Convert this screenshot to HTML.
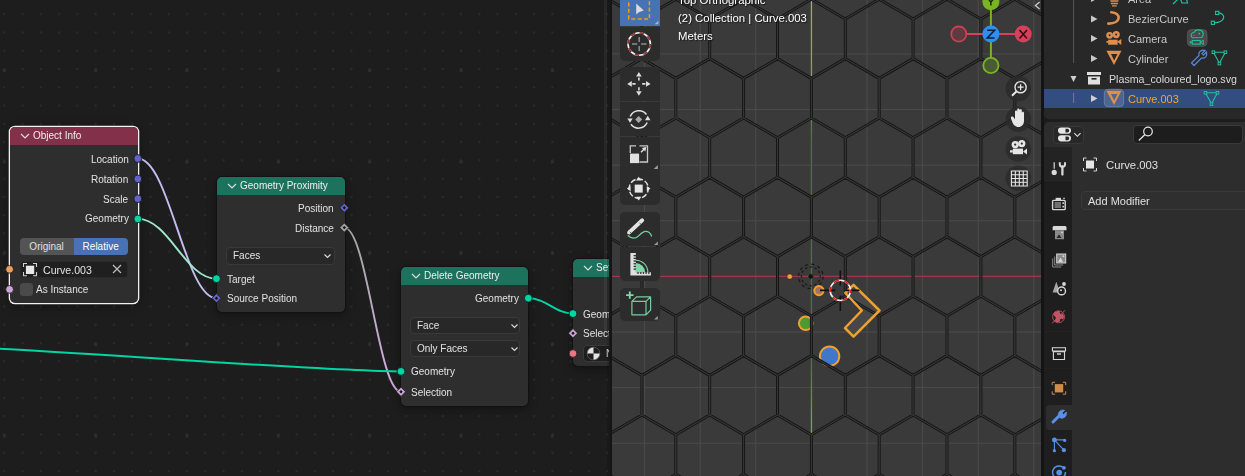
<!DOCTYPE html><html><head><meta charset="utf-8"><style>
*{margin:0;padding:0;box-sizing:border-box}
html,body{width:1245px;height:476px;overflow:hidden;background:#1d1d1d;font-family:"Liberation Sans", sans-serif;-webkit-font-smoothing:antialiased;}
.lbl,.vt,.ot,.hd,.dd{will-change:transform}
.abs{position:absolute}
.node{position:absolute;background:#2e2e2e;border-radius:5px;box-shadow:0 0 0 1px #121212,0 2px 8px 1px rgba(0,0,0,0.35);}
.node .hd{position:absolute;left:0;top:0;right:0;border-radius:5px 5px 0 0;color:#eeeeee;font-size:10px;line-height:18px;padding-left:23px;white-space:nowrap;}
.lbl{position:absolute;color:#e2e2e2;font-size:10px;line-height:14px;white-space:nowrap}
.dd{position:absolute;background:#282828;border:1px solid #3a3a3a;border-radius:4px;color:#e2e2e2;font-size:10px;line-height:15px;padding-left:6px;white-space:nowrap}
.vt{position:absolute;color:#ffffff;font-size:11.4px;white-space:nowrap;text-shadow:1px 1px 1px rgba(0,0,0,0.6)}
.ot{position:absolute;color:#d0d0d0;font-size:11px;white-space:nowrap;line-height:14px}
</style></head><body><div class="abs" style="left:0;top:0;width:609.2px;height:476px;overflow:hidden;background:#1d1d1d">
<svg class="abs" style="left:0;top:0" width="609.2" height="476">
<defs><pattern id="dots" x="3.3" y="13.2" width="18.27" height="18.27" patternUnits="userSpaceOnUse"><rect x="0" y="0" width="2" height="2" fill="#2b2b2b"/></pattern></defs>
<rect width="609.2" height="476" fill="url(#dots)"/>
<defs><pattern id="mdots" x="2.8" y="-22.3" width="91.35" height="91.35" patternUnits="userSpaceOnUse"><rect x="0" y="0" width="3" height="3" fill="#2e2e2e"/></pattern></defs>
<rect width="609.2" height="476" fill="url(#mdots)"/>
<defs><linearGradient id="g1" x1="0" y1="0" x2="0" y2="1"><stop offset="0.15" stop-color="#a8a8a8"/><stop offset="0.85" stop-color="#cfa9dc"/></linearGradient></defs>
<path d="M137.8,158.5 C169.24,158.5 184.96,298.2 216.4,298.2" stroke="#c4bdf0" stroke-width="1.9" fill="none"/>
<path d="M137.8,218.9 C169.24,218.9 184.96,278.7 216.4,278.7" stroke="#9de8cc" stroke-width="1.9" fill="none"/>
<path d="M344.3,227.6 C366.98,227.6 378.32,391.8 401,391.8" stroke="url(#g1)" stroke-width="1.9" fill="none"/>
<path d="M528.3,298.2 C546.18,298.2 555.12,313.6 573,313.6" stroke="#00d6a3" stroke-width="2" fill="none"/>
<path d="M-5,348.5 C150,357 330,371.4 401,371.4" stroke="#00d6a3" stroke-width="2" fill="none"/>
</svg>
<div class="node" style="left:9.8px;top:127px;width:128px;height:175.8px;box-shadow:0 0 0 1.3px #f2f2f2,0 2px 8px 1px rgba(0,0,0,0.35);"><div class="hd" style="height:18px;background:#83314a;line-height:18px"><svg class="abs" style="left:10px;top:6.0px" width="10" height="6"><path d="M1,1 L5,5 L9,1" stroke="#dcdcdc" stroke-width="1.2" fill="none"/></svg>Object Info</div>
</div>
<div class="lbl" style="right:480.70000000000005px;top:152.6px;text-align:right">Location</div>
<div class="lbl" style="right:480.70000000000005px;top:172.8px;text-align:right">Rotation</div>
<div class="lbl" style="right:480.70000000000005px;top:192.5px;text-align:right">Scale</div>
<div class="lbl" style="right:480.70000000000005px;top:212.3px;text-align:right">Geometry</div>
<div class="abs" style="left:19.6px;top:238px;width:54px;height:17px;background:#545454;border-radius:4px 0 0 4px;color:#e0e0e0;font-size:10px;line-height:17px;text-align:center">Original</div>
<div class="abs" style="left:73.6px;top:238px;width:54.2px;height:17px;background:#4772b3;border-radius:0 4px 4px 0;color:#ffffff;font-size:10px;line-height:17px;text-align:center">Relative</div>
<div class="abs" style="left:19.6px;top:260.5px;width:108.2px;height:17.6px;background:#1f1f1f;border:1px solid #2a2a2a;border-radius:4px;"></div>
<svg class="abs" style="left:22px;top:262px" width="17" height="16"><path d="M1.5,5 V1.5 H5 M11,1.5 H14.5 V5 M14.5,10 V13.8 H11 M5,13.8 H1.5 V10" stroke="#d0d0d0" stroke-width="1.1" fill="none"/><rect x="3.9" y="3.7" width="8.3" height="8.3" fill="#e8e8e8"/></svg>
<div class="lbl" style="left:42.5px;top:262.6px;font-size:10.6px">Curve.003</div>
<svg class="abs" style="left:112px;top:264px" width="10" height="10"><path d="M1,1 L9,9 M9,1 L1,9" stroke="#bdbdbd" stroke-width="1.2"/></svg>
<div class="abs" style="left:19.6px;top:282.7px;width:13.4px;height:13.4px;background:#4a4a4a;border-radius:3px"></div>
<div class="lbl" style="left:36px;top:283.29999999999995px">As Instance</div>
<div class="node" style="left:216.5px;top:176.5px;width:128px;height:135px;"><div class="hd" style="height:18px;background:#1d725e;line-height:18px"><svg class="abs" style="left:10px;top:6.0px" width="10" height="6"><path d="M1,1 L5,5 L9,1" stroke="#dcdcdc" stroke-width="1.2" fill="none"/></svg>Geometry Proximity</div>
</div>
<div class="lbl" style="right:275.20000000000005px;top:201.70000000000002px;text-align:right">Position</div>
<div class="lbl" style="right:275.20000000000005px;top:221.5px;text-align:right">Distance</div>
<div class="dd" style="left:226px;top:247px;width:109px;height:17.5px">Faces</div>
<svg class="abs" style="left:323px;top:253px" width="9" height="6"><path d="M1.5,1.5 L4.5,4.5 L7.5,1.5" stroke="#dcdcdc" stroke-width="1.1" fill="none"/></svg>
<div class="lbl" style="left:227px;top:272.59999999999997px">Target</div>
<div class="lbl" style="left:227px;top:292.09999999999997px">Source Position</div>
<div class="node" style="left:401px;top:267px;width:127.3px;height:138.5px;"><div class="hd" style="height:18px;background:#1d725e;line-height:18px"><svg class="abs" style="left:10px;top:6.0px" width="10" height="6"><path d="M1,1 L5,5 L9,1" stroke="#dcdcdc" stroke-width="1.2" fill="none"/></svg>Delete Geometry</div>
</div>
<div class="lbl" style="right:90.20000000000005px;top:292.09999999999997px;text-align:right">Geometry</div>
<div class="dd" style="left:409.8px;top:317.3px;width:109.5px;height:17px;line-height:15.5px">Face</div>
<svg class="abs" style="left:509.5px;top:323.3px" width="9" height="6"><path d="M1.5,1.5 L4.5,4.5 L7.5,1.5" stroke="#dcdcdc" stroke-width="1.1" fill="none"/></svg>
<div class="dd" style="left:409.8px;top:340.3px;width:109.5px;height:17px;line-height:15.5px">Only Faces</div>
<svg class="abs" style="left:509.5px;top:346.3px" width="9" height="6"><path d="M1.5,1.5 L4.5,4.5 L7.5,1.5" stroke="#dcdcdc" stroke-width="1.1" fill="none"/></svg>
<div class="lbl" style="left:411px;top:365.29999999999995px">Geometry</div>
<div class="lbl" style="left:411px;top:385.7px">Selection</div>
<div class="node" style="left:573px;top:259px;width:140px;height:107px;"><div class="hd" style="height:18px;background:#1d725e;line-height:18px"><svg class="abs" style="left:10px;top:6.0px" width="10" height="6"><path d="M1,1 L5,5 L9,1" stroke="#dcdcdc" stroke-width="1.2" fill="none"/></svg>Set Material</div>
</div>
<div class="lbl" style="left:583px;top:307.5px">Geometry</div>
<div class="lbl" style="left:583px;top:327.09999999999997px">Selection</div>
<div class="dd" style="left:582.6px;top:344.9px;width:60px;height:17px;background:#1e1e1e;border-color:#3a3a3a"></div>
<svg class="abs" style="left:585.5px;top:345.9px" width="15" height="15"><circle cx="7.5" cy="7.5" r="6.3" fill="#e4e4e4" stroke="#777" stroke-width="0.6"/><path d="M7.5,1.2 A6.3,6.3 0 0 1 13.8,7.5 H7.5Z M7.5,7.5 H1.2 A6.3,6.3 0 0 0 7.5,13.8Z" fill="#1e1e1e"/></svg>
<div class="lbl" style="left:606px;top:347px">N</div>
<svg class="abs" style="left:0;top:0" width="609.2" height="476"><circle cx="137.8" cy="158.5" r="3.9" fill="#6363c7" stroke="#141414" stroke-width="0.8"/><circle cx="137.8" cy="178.9" r="3.9" fill="#6363c7" stroke="#141414" stroke-width="0.8"/><circle cx="137.8" cy="198.7" r="3.9" fill="#6363c7" stroke="#141414" stroke-width="0.8"/><circle cx="137.8" cy="218.9" r="3.9" fill="#00d6a3" stroke="#141414" stroke-width="0.8"/><circle cx="9.6" cy="269.3" r="3.9" fill="#ed9e5c" stroke="#141414" stroke-width="0.8"/><circle cx="9.6" cy="289.4" r="3.9" fill="#cca6d6" stroke="#141414" stroke-width="0.8"/><polygon points="344.3,203.20000000000002 348.90000000000003,207.8 344.3,212.4 339.7,207.8" fill="#6363c7" stroke="#141414" stroke-width="0.7"/><polygon points="344.3,206.10000000000002 346.0,207.8 344.3,209.5 342.6,207.8" fill="#161616"/><polygon points="344.3,223.0 348.90000000000003,227.6 344.3,232.2 339.7,227.6" fill="#a1a1a1" stroke="#141414" stroke-width="0.7"/><polygon points="344.3,225.9 346.0,227.6 344.3,229.29999999999998 342.6,227.6" fill="#161616"/><circle cx="216.5" cy="278.7" r="3.9" fill="#00d6a3" stroke="#141414" stroke-width="0.8"/><polygon points="216.5,293.59999999999997 221.1,298.2 216.5,302.8 211.9,298.2" fill="#6363c7" stroke="#141414" stroke-width="0.7"/><polygon points="216.5,296.5 218.2,298.2 216.5,299.9 214.8,298.2" fill="#161616"/><circle cx="528.3" cy="298.2" r="3.9" fill="#00d6a3" stroke="#141414" stroke-width="0.8"/><circle cx="401" cy="371.4" r="3.9" fill="#00d6a3" stroke="#141414" stroke-width="0.8"/><polygon points="401,387.2 405.6,391.8 401,396.40000000000003 396.4,391.8" fill="#cca6d6" stroke="#141414" stroke-width="0.7"/><polygon points="401,390.1 402.7,391.8 401,393.5 399.3,391.8" fill="#161616"/><circle cx="573" cy="313.6" r="3.9" fill="#00d6a3" stroke="#141414" stroke-width="0.8"/><polygon points="573,328.59999999999997 577.6,333.2 573,337.8 568.4,333.2" fill="#cca6d6" stroke="#141414" stroke-width="0.7"/><polygon points="573,331.5 574.7,333.2 573,334.9 571.3,333.2" fill="#161616"/><circle cx="573" cy="353.5" r="3.9" fill="#eb7582" stroke="#141414" stroke-width="0.8"/></svg>
<div class="abs" style="left:603.7px;top:-5px;width:3.6px;height:336px;border-radius:2px;background:rgba(255,255,255,0.05)"></div>
</div>
<div class="abs" style="left:607.1px;top:0;width:2.5px;height:476px;background:rgba(0,0,0,0.12)"></div><div class="abs" style="left:609.6px;top:0;width:2.2px;height:476px;background:#151515"></div>
<div class="abs" style="left:611.8px;top:0;width:429.4000000000001px;height:476px;overflow:hidden;background:#3a3a3a">
<svg class="abs" style="left:-611.8px;top:0" width="1245" height="476"><line x1="477.74" y1="0" x2="477.74" y2="476" stroke="#4c4c4c" stroke-width="1"/><line x1="533.35" y1="0" x2="533.35" y2="476" stroke="#4c4c4c" stroke-width="1"/><line x1="588.96" y1="0" x2="588.96" y2="476" stroke="#4c4c4c" stroke-width="1"/><line x1="644.57" y1="0" x2="644.57" y2="476" stroke="#4c4c4c" stroke-width="1"/><line x1="700.18" y1="0" x2="700.18" y2="476" stroke="#4c4c4c" stroke-width="1"/><line x1="755.79" y1="0" x2="755.79" y2="476" stroke="#4c4c4c" stroke-width="1"/><line x1="867.01" y1="0" x2="867.01" y2="476" stroke="#4c4c4c" stroke-width="1"/><line x1="922.62" y1="0" x2="922.62" y2="476" stroke="#4c4c4c" stroke-width="1"/><line x1="978.23" y1="0" x2="978.23" y2="476" stroke="#4c4c4c" stroke-width="1"/><line x1="1033.84" y1="0" x2="1033.84" y2="476" stroke="#4c4c4c" stroke-width="1"/><line x1="1089.45" y1="0" x2="1089.45" y2="476" stroke="#4c4c4c" stroke-width="1"/><line x1="0" y1="-57.26" x2="1245" y2="-57.26" stroke="#4c4c4c" stroke-width="1"/><line x1="0" y1="-1.65" x2="1245" y2="-1.65" stroke="#4c4c4c" stroke-width="1"/><line x1="0" y1="53.96" x2="1245" y2="53.96" stroke="#4c4c4c" stroke-width="1"/><line x1="0" y1="109.57" x2="1245" y2="109.57" stroke="#4c4c4c" stroke-width="1"/><line x1="0" y1="165.18" x2="1245" y2="165.18" stroke="#4c4c4c" stroke-width="1"/><line x1="0" y1="220.79" x2="1245" y2="220.79" stroke="#4c4c4c" stroke-width="1"/><line x1="0" y1="332.01" x2="1245" y2="332.01" stroke="#4c4c4c" stroke-width="1"/><line x1="0" y1="387.62" x2="1245" y2="387.62" stroke="#4c4c4c" stroke-width="1"/><line x1="0" y1="443.23" x2="1245" y2="443.23" stroke="#4c4c4c" stroke-width="1"/><line x1="0" y1="498.84" x2="1245" y2="498.84" stroke="#4c4c4c" stroke-width="1"/><line x1="0" y1="554.45" x2="1245" y2="554.45" stroke="#4c4c4c" stroke-width="1"/><line x1="0" y1="276.4" x2="1245" y2="276.4" stroke="#9c3a4c" stroke-width="1.2"/><defs><linearGradient id="ya" x1="0" y1="0" x2="0" y2="1"><stop offset="0" stop-color="#86c42c"/><stop offset="0.16" stop-color="#78b028"/><stop offset="0.3" stop-color="#52702e"/><stop offset="0.75" stop-color="#52702e"/><stop offset="0.9" stop-color="#7aac2a"/><stop offset="1" stop-color="#6a9a2a"/></linearGradient></defs><rect x="810.8" y="0" width="1.3" height="476" fill="url(#ya)"/><path d="M853.5,284.8 L879.5,310.5 L853.5,336.6 L845,328 L861.8,310.5 L845.3,293Z" fill="#474747"/><circle cx="805.7" cy="323.3" r="6.8" fill="#4e9a30" stroke="#f0a030" stroke-width="2"/><circle cx="829.6" cy="356.2" r="9.7" fill="#3f78c8" stroke="#f0a030" stroke-width="2"/><path d="M574.10,-60.20 L608.00,-40.40 L608.00,-0.80 L574.10,19.00 L540.20,-0.80 L540.20,-40.40Z M641.90,-60.20 L675.80,-40.40 L675.80,-0.80 L641.90,19.00 L608.00,-0.80 L608.00,-40.40Z M709.70,-60.20 L743.60,-40.40 L743.60,-0.80 L709.70,19.00 L675.80,-0.80 L675.80,-40.40Z M777.50,-60.20 L811.40,-40.40 L811.40,-0.80 L777.50,19.00 L743.60,-0.80 L743.60,-40.40Z M845.30,-60.20 L879.20,-40.40 L879.20,-0.80 L845.30,19.00 L811.40,-0.80 L811.40,-40.40Z M913.10,-60.20 L947.00,-40.40 L947.00,-0.80 L913.10,19.00 L879.20,-0.80 L879.20,-40.40Z M980.90,-60.20 L1014.80,-40.40 L1014.80,-0.80 L980.90,19.00 L947.00,-0.80 L947.00,-40.40Z M1048.70,-60.20 L1082.60,-40.40 L1082.60,-0.80 L1048.70,19.00 L1014.80,-0.80 L1014.80,-40.40Z M608.00,-0.80 L641.90,19.00 L641.90,58.60 L608.00,78.40 L574.10,58.60 L574.10,19.00Z M675.80,-0.80 L709.70,19.00 L709.70,58.60 L675.80,78.40 L641.90,58.60 L641.90,19.00Z M743.60,-0.80 L777.50,19.00 L777.50,58.60 L743.60,78.40 L709.70,58.60 L709.70,19.00Z M811.40,-0.80 L845.30,19.00 L845.30,58.60 L811.40,78.40 L777.50,58.60 L777.50,19.00Z M879.20,-0.80 L913.10,19.00 L913.10,58.60 L879.20,78.40 L845.30,58.60 L845.30,19.00Z M947.00,-0.80 L980.90,19.00 L980.90,58.60 L947.00,78.40 L913.10,58.60 L913.10,19.00Z M1014.80,-0.80 L1048.70,19.00 L1048.70,58.60 L1014.80,78.40 L980.90,58.60 L980.90,19.00Z M574.10,58.60 L608.00,78.40 L608.00,118.00 L574.10,137.80 L540.20,118.00 L540.20,78.40Z M641.90,58.60 L675.80,78.40 L675.80,118.00 L641.90,137.80 L608.00,118.00 L608.00,78.40Z M709.70,58.60 L743.60,78.40 L743.60,118.00 L709.70,137.80 L675.80,118.00 L675.80,78.40Z M777.50,58.60 L811.40,78.40 L811.40,118.00 L777.50,137.80 L743.60,118.00 L743.60,78.40Z M845.30,58.60 L879.20,78.40 L879.20,118.00 L845.30,137.80 L811.40,118.00 L811.40,78.40Z M913.10,58.60 L947.00,78.40 L947.00,118.00 L913.10,137.80 L879.20,118.00 L879.20,78.40Z M980.90,58.60 L1014.80,78.40 L1014.80,118.00 L980.90,137.80 L947.00,118.00 L947.00,78.40Z M1048.70,58.60 L1082.60,78.40 L1082.60,118.00 L1048.70,137.80 L1014.80,118.00 L1014.80,78.40Z M608.00,118.00 L641.90,137.80 L641.90,177.40 L608.00,197.20 L574.10,177.40 L574.10,137.80Z M675.80,118.00 L709.70,137.80 L709.70,177.40 L675.80,197.20 L641.90,177.40 L641.90,137.80Z M743.60,118.00 L777.50,137.80 L777.50,177.40 L743.60,197.20 L709.70,177.40 L709.70,137.80Z M811.40,118.00 L845.30,137.80 L845.30,177.40 L811.40,197.20 L777.50,177.40 L777.50,137.80Z M879.20,118.00 L913.10,137.80 L913.10,177.40 L879.20,197.20 L845.30,177.40 L845.30,137.80Z M947.00,118.00 L980.90,137.80 L980.90,177.40 L947.00,197.20 L913.10,177.40 L913.10,137.80Z M1014.80,118.00 L1048.70,137.80 L1048.70,177.40 L1014.80,197.20 L980.90,177.40 L980.90,137.80Z M574.10,177.40 L608.00,197.20 L608.00,236.80 L574.10,256.60 L540.20,236.80 L540.20,197.20Z M641.90,177.40 L675.80,197.20 L675.80,236.80 L641.90,256.60 L608.00,236.80 L608.00,197.20Z M709.70,177.40 L743.60,197.20 L743.60,236.80 L709.70,256.60 L675.80,236.80 L675.80,197.20Z M777.50,177.40 L811.40,197.20 L811.40,236.80 L777.50,256.60 L743.60,236.80 L743.60,197.20Z M845.30,177.40 L879.20,197.20 L879.20,236.80 L845.30,256.60 L811.40,236.80 L811.40,197.20Z M913.10,177.40 L947.00,197.20 L947.00,236.80 L913.10,256.60 L879.20,236.80 L879.20,197.20Z M980.90,177.40 L1014.80,197.20 L1014.80,236.80 L980.90,256.60 L947.00,236.80 L947.00,197.20Z M1048.70,177.40 L1082.60,197.20 L1082.60,236.80 L1048.70,256.60 L1014.80,236.80 L1014.80,197.20Z M608.00,236.80 L641.90,256.60 L641.90,296.20 L608.00,316.00 L574.10,296.20 L574.10,256.60Z M675.80,236.80 L709.70,256.60 L709.70,296.20 L675.80,316.00 L641.90,296.20 L641.90,256.60Z M743.60,236.80 L777.50,256.60 L777.50,296.20 L743.60,316.00 L709.70,296.20 L709.70,256.60Z M811.40,236.80 L845.30,256.60 L845.30,296.20 L811.40,316.00 L777.50,296.20 L777.50,256.60Z M879.20,236.80 L913.10,256.60 L913.10,296.20 L879.20,316.00 L845.30,296.20 L845.30,256.60Z M947.00,236.80 L980.90,256.60 L980.90,296.20 L947.00,316.00 L913.10,296.20 L913.10,256.60Z M1014.80,236.80 L1048.70,256.60 L1048.70,296.20 L1014.80,316.00 L980.90,296.20 L980.90,256.60Z M574.10,296.20 L608.00,316.00 L608.00,355.60 L574.10,375.40 L540.20,355.60 L540.20,316.00Z M641.90,296.20 L675.80,316.00 L675.80,355.60 L641.90,375.40 L608.00,355.60 L608.00,316.00Z M709.70,296.20 L743.60,316.00 L743.60,355.60 L709.70,375.40 L675.80,355.60 L675.80,316.00Z M777.50,296.20 L811.40,316.00 L811.40,355.60 L777.50,375.40 L743.60,355.60 L743.60,316.00Z M845.30,296.20 L879.20,316.00 L879.20,355.60 L845.30,375.40 L811.40,355.60 L811.40,316.00Z M913.10,296.20 L947.00,316.00 L947.00,355.60 L913.10,375.40 L879.20,355.60 L879.20,316.00Z M980.90,296.20 L1014.80,316.00 L1014.80,355.60 L980.90,375.40 L947.00,355.60 L947.00,316.00Z M1048.70,296.20 L1082.60,316.00 L1082.60,355.60 L1048.70,375.40 L1014.80,355.60 L1014.80,316.00Z M608.00,355.60 L641.90,375.40 L641.90,415.00 L608.00,434.80 L574.10,415.00 L574.10,375.40Z M675.80,355.60 L709.70,375.40 L709.70,415.00 L675.80,434.80 L641.90,415.00 L641.90,375.40Z M743.60,355.60 L777.50,375.40 L777.50,415.00 L743.60,434.80 L709.70,415.00 L709.70,375.40Z M811.40,355.60 L845.30,375.40 L845.30,415.00 L811.40,434.80 L777.50,415.00 L777.50,375.40Z M879.20,355.60 L913.10,375.40 L913.10,415.00 L879.20,434.80 L845.30,415.00 L845.30,375.40Z M947.00,355.60 L980.90,375.40 L980.90,415.00 L947.00,434.80 L913.10,415.00 L913.10,375.40Z M1014.80,355.60 L1048.70,375.40 L1048.70,415.00 L1014.80,434.80 L980.90,415.00 L980.90,375.40Z M574.10,415.00 L608.00,434.80 L608.00,474.40 L574.10,494.20 L540.20,474.40 L540.20,434.80Z M641.90,415.00 L675.80,434.80 L675.80,474.40 L641.90,494.20 L608.00,474.40 L608.00,434.80Z M709.70,415.00 L743.60,434.80 L743.60,474.40 L709.70,494.20 L675.80,474.40 L675.80,434.80Z M777.50,415.00 L811.40,434.80 L811.40,474.40 L777.50,494.20 L743.60,474.40 L743.60,434.80Z M845.30,415.00 L879.20,434.80 L879.20,474.40 L845.30,494.20 L811.40,474.40 L811.40,434.80Z M913.10,415.00 L947.00,434.80 L947.00,474.40 L913.10,494.20 L879.20,474.40 L879.20,434.80Z M980.90,415.00 L1014.80,434.80 L1014.80,474.40 L980.90,494.20 L947.00,474.40 L947.00,434.80Z M1048.70,415.00 L1082.60,434.80 L1082.60,474.40 L1048.70,494.20 L1014.80,474.40 L1014.80,434.80Z M608.00,474.40 L641.90,494.20 L641.90,533.80 L608.00,553.60 L574.10,533.80 L574.10,494.20Z M675.80,474.40 L709.70,494.20 L709.70,533.80 L675.80,553.60 L641.90,533.80 L641.90,494.20Z M743.60,474.40 L777.50,494.20 L777.50,533.80 L743.60,553.60 L709.70,533.80 L709.70,494.20Z M811.40,474.40 L845.30,494.20 L845.30,533.80 L811.40,553.60 L777.50,533.80 L777.50,494.20Z M879.20,474.40 L913.10,494.20 L913.10,533.80 L879.20,553.60 L845.30,533.80 L845.30,494.20Z M947.00,474.40 L980.90,494.20 L980.90,533.80 L947.00,553.60 L913.10,533.80 L913.10,494.20Z M1014.80,474.40 L1048.70,494.20 L1048.70,533.80 L1014.80,553.60 L980.90,533.80 L980.90,494.20Z" stroke="#161616" stroke-width="3" fill="none" stroke-linejoin="miter"/><path d="M574.10,-60.20 L608.00,-40.40 L608.00,-0.80 L574.10,19.00 L540.20,-0.80 L540.20,-40.40Z M641.90,-60.20 L675.80,-40.40 L675.80,-0.80 L641.90,19.00 L608.00,-0.80 L608.00,-40.40Z M709.70,-60.20 L743.60,-40.40 L743.60,-0.80 L709.70,19.00 L675.80,-0.80 L675.80,-40.40Z M777.50,-60.20 L811.40,-40.40 L811.40,-0.80 L777.50,19.00 L743.60,-0.80 L743.60,-40.40Z M845.30,-60.20 L879.20,-40.40 L879.20,-0.80 L845.30,19.00 L811.40,-0.80 L811.40,-40.40Z M913.10,-60.20 L947.00,-40.40 L947.00,-0.80 L913.10,19.00 L879.20,-0.80 L879.20,-40.40Z M980.90,-60.20 L1014.80,-40.40 L1014.80,-0.80 L980.90,19.00 L947.00,-0.80 L947.00,-40.40Z M1048.70,-60.20 L1082.60,-40.40 L1082.60,-0.80 L1048.70,19.00 L1014.80,-0.80 L1014.80,-40.40Z M608.00,-0.80 L641.90,19.00 L641.90,58.60 L608.00,78.40 L574.10,58.60 L574.10,19.00Z M675.80,-0.80 L709.70,19.00 L709.70,58.60 L675.80,78.40 L641.90,58.60 L641.90,19.00Z M743.60,-0.80 L777.50,19.00 L777.50,58.60 L743.60,78.40 L709.70,58.60 L709.70,19.00Z M811.40,-0.80 L845.30,19.00 L845.30,58.60 L811.40,78.40 L777.50,58.60 L777.50,19.00Z M879.20,-0.80 L913.10,19.00 L913.10,58.60 L879.20,78.40 L845.30,58.60 L845.30,19.00Z M947.00,-0.80 L980.90,19.00 L980.90,58.60 L947.00,78.40 L913.10,58.60 L913.10,19.00Z M1014.80,-0.80 L1048.70,19.00 L1048.70,58.60 L1014.80,78.40 L980.90,58.60 L980.90,19.00Z M574.10,58.60 L608.00,78.40 L608.00,118.00 L574.10,137.80 L540.20,118.00 L540.20,78.40Z M641.90,58.60 L675.80,78.40 L675.80,118.00 L641.90,137.80 L608.00,118.00 L608.00,78.40Z M709.70,58.60 L743.60,78.40 L743.60,118.00 L709.70,137.80 L675.80,118.00 L675.80,78.40Z M777.50,58.60 L811.40,78.40 L811.40,118.00 L777.50,137.80 L743.60,118.00 L743.60,78.40Z M845.30,58.60 L879.20,78.40 L879.20,118.00 L845.30,137.80 L811.40,118.00 L811.40,78.40Z M913.10,58.60 L947.00,78.40 L947.00,118.00 L913.10,137.80 L879.20,118.00 L879.20,78.40Z M980.90,58.60 L1014.80,78.40 L1014.80,118.00 L980.90,137.80 L947.00,118.00 L947.00,78.40Z M1048.70,58.60 L1082.60,78.40 L1082.60,118.00 L1048.70,137.80 L1014.80,118.00 L1014.80,78.40Z M608.00,118.00 L641.90,137.80 L641.90,177.40 L608.00,197.20 L574.10,177.40 L574.10,137.80Z M675.80,118.00 L709.70,137.80 L709.70,177.40 L675.80,197.20 L641.90,177.40 L641.90,137.80Z M743.60,118.00 L777.50,137.80 L777.50,177.40 L743.60,197.20 L709.70,177.40 L709.70,137.80Z M811.40,118.00 L845.30,137.80 L845.30,177.40 L811.40,197.20 L777.50,177.40 L777.50,137.80Z M879.20,118.00 L913.10,137.80 L913.10,177.40 L879.20,197.20 L845.30,177.40 L845.30,137.80Z M947.00,118.00 L980.90,137.80 L980.90,177.40 L947.00,197.20 L913.10,177.40 L913.10,137.80Z M1014.80,118.00 L1048.70,137.80 L1048.70,177.40 L1014.80,197.20 L980.90,177.40 L980.90,137.80Z M574.10,177.40 L608.00,197.20 L608.00,236.80 L574.10,256.60 L540.20,236.80 L540.20,197.20Z M641.90,177.40 L675.80,197.20 L675.80,236.80 L641.90,256.60 L608.00,236.80 L608.00,197.20Z M709.70,177.40 L743.60,197.20 L743.60,236.80 L709.70,256.60 L675.80,236.80 L675.80,197.20Z M777.50,177.40 L811.40,197.20 L811.40,236.80 L777.50,256.60 L743.60,236.80 L743.60,197.20Z M845.30,177.40 L879.20,197.20 L879.20,236.80 L845.30,256.60 L811.40,236.80 L811.40,197.20Z M913.10,177.40 L947.00,197.20 L947.00,236.80 L913.10,256.60 L879.20,236.80 L879.20,197.20Z M980.90,177.40 L1014.80,197.20 L1014.80,236.80 L980.90,256.60 L947.00,236.80 L947.00,197.20Z M1048.70,177.40 L1082.60,197.20 L1082.60,236.80 L1048.70,256.60 L1014.80,236.80 L1014.80,197.20Z M608.00,236.80 L641.90,256.60 L641.90,296.20 L608.00,316.00 L574.10,296.20 L574.10,256.60Z M675.80,236.80 L709.70,256.60 L709.70,296.20 L675.80,316.00 L641.90,296.20 L641.90,256.60Z M743.60,236.80 L777.50,256.60 L777.50,296.20 L743.60,316.00 L709.70,296.20 L709.70,256.60Z M811.40,236.80 L845.30,256.60 L845.30,296.20 L811.40,316.00 L777.50,296.20 L777.50,256.60Z M879.20,236.80 L913.10,256.60 L913.10,296.20 L879.20,316.00 L845.30,296.20 L845.30,256.60Z M947.00,236.80 L980.90,256.60 L980.90,296.20 L947.00,316.00 L913.10,296.20 L913.10,256.60Z M1014.80,236.80 L1048.70,256.60 L1048.70,296.20 L1014.80,316.00 L980.90,296.20 L980.90,256.60Z M574.10,296.20 L608.00,316.00 L608.00,355.60 L574.10,375.40 L540.20,355.60 L540.20,316.00Z M641.90,296.20 L675.80,316.00 L675.80,355.60 L641.90,375.40 L608.00,355.60 L608.00,316.00Z M709.70,296.20 L743.60,316.00 L743.60,355.60 L709.70,375.40 L675.80,355.60 L675.80,316.00Z M777.50,296.20 L811.40,316.00 L811.40,355.60 L777.50,375.40 L743.60,355.60 L743.60,316.00Z M845.30,296.20 L879.20,316.00 L879.20,355.60 L845.30,375.40 L811.40,355.60 L811.40,316.00Z M913.10,296.20 L947.00,316.00 L947.00,355.60 L913.10,375.40 L879.20,355.60 L879.20,316.00Z M980.90,296.20 L1014.80,316.00 L1014.80,355.60 L980.90,375.40 L947.00,355.60 L947.00,316.00Z M1048.70,296.20 L1082.60,316.00 L1082.60,355.60 L1048.70,375.40 L1014.80,355.60 L1014.80,316.00Z M608.00,355.60 L641.90,375.40 L641.90,415.00 L608.00,434.80 L574.10,415.00 L574.10,375.40Z M675.80,355.60 L709.70,375.40 L709.70,415.00 L675.80,434.80 L641.90,415.00 L641.90,375.40Z M743.60,355.60 L777.50,375.40 L777.50,415.00 L743.60,434.80 L709.70,415.00 L709.70,375.40Z M811.40,355.60 L845.30,375.40 L845.30,415.00 L811.40,434.80 L777.50,415.00 L777.50,375.40Z M879.20,355.60 L913.10,375.40 L913.10,415.00 L879.20,434.80 L845.30,415.00 L845.30,375.40Z M947.00,355.60 L980.90,375.40 L980.90,415.00 L947.00,434.80 L913.10,415.00 L913.10,375.40Z M1014.80,355.60 L1048.70,375.40 L1048.70,415.00 L1014.80,434.80 L980.90,415.00 L980.90,375.40Z M574.10,415.00 L608.00,434.80 L608.00,474.40 L574.10,494.20 L540.20,474.40 L540.20,434.80Z M641.90,415.00 L675.80,434.80 L675.80,474.40 L641.90,494.20 L608.00,474.40 L608.00,434.80Z M709.70,415.00 L743.60,434.80 L743.60,474.40 L709.70,494.20 L675.80,474.40 L675.80,434.80Z M777.50,415.00 L811.40,434.80 L811.40,474.40 L777.50,494.20 L743.60,474.40 L743.60,434.80Z M845.30,415.00 L879.20,434.80 L879.20,474.40 L845.30,494.20 L811.40,474.40 L811.40,434.80Z M913.10,415.00 L947.00,434.80 L947.00,474.40 L913.10,494.20 L879.20,474.40 L879.20,434.80Z M980.90,415.00 L1014.80,434.80 L1014.80,474.40 L980.90,494.20 L947.00,474.40 L947.00,434.80Z M1048.70,415.00 L1082.60,434.80 L1082.60,474.40 L1048.70,494.20 L1014.80,474.40 L1014.80,434.80Z M608.00,474.40 L641.90,494.20 L641.90,533.80 L608.00,553.60 L574.10,533.80 L574.10,494.20Z M675.80,474.40 L709.70,494.20 L709.70,533.80 L675.80,553.60 L641.90,533.80 L641.90,494.20Z M743.60,474.40 L777.50,494.20 L777.50,533.80 L743.60,553.60 L709.70,533.80 L709.70,494.20Z M811.40,474.40 L845.30,494.20 L845.30,533.80 L811.40,553.60 L777.50,533.80 L777.50,494.20Z M879.20,474.40 L913.10,494.20 L913.10,533.80 L879.20,553.60 L845.30,533.80 L845.30,494.20Z M947.00,474.40 L980.90,494.20 L980.90,533.80 L947.00,553.60 L913.10,533.80 L913.10,494.20Z M1014.80,474.40 L1048.70,494.20 L1048.70,533.80 L1014.80,553.60 L980.90,533.80 L980.90,494.20Z" stroke="#353535" stroke-width="0.9" fill="none"/></svg>
</div>
<div class="abs" style="left:1041.2px;top:0;width:2.8px;height:476px;background:#141414"></div>
<div class="abs" style="left:1044px;top:0;width:201px;height:119px;background:#282828;border-radius:0 0 0 5px"></div>
<div class="abs" style="left:1044px;top:88.5px;width:201px;height:19.5px;background:#334d80"></div>
<div class="abs" style="left:1044px;top:122px;width:201px;height:354px;background:#2d2d2d;border-radius:5px 0 0 0"></div>
<div class="abs" style="left:1044px;top:147px;width:28px;height:329px;background:#1e1e1e"></div>
<div class="abs" style="left:1044px;top:147.3px;width:28px;height:36px;background:#232323;border-bottom:1px solid #1b1b1b"></div>
<svg class="abs" style="left:0;top:0" width="1245" height="476"><defs><clipPath id="vc"><rect x="611.8" y="0" width="429.4" height="476"/></clipPath></defs><g clip-path="url(#vc)"><circle cx="810.8" cy="276.4" r="12.2" fill="none" stroke="#181818" stroke-width="1.2" stroke-dasharray="3.2 3.2"/><circle cx="810.8" cy="276.4" r="9.4" fill="none" stroke="#181818" stroke-width="1.2" stroke-dasharray="2.5 2.4" stroke-dashoffset="1.2"/><path d="M810.8,273.6 L813.6,276.4 L810.8,279.2 L808,276.4Z" fill="#111"/><circle cx="789.7" cy="276.5" r="2.6" fill="#f5a030" stroke="#222" stroke-width="0.4"/><circle cx="818.9" cy="290.6" r="4.6" fill="#a87060" stroke="#f0a030" stroke-width="2"/><path d="M853.5,284.8 L879.5,310.5 L853.5,336.6 L845,328 L861.8,310.5 L845.3,293Z" fill="none" stroke="#f0a030" stroke-width="2.5" stroke-linejoin="round"/><path d="M820,290.4 H835.3 M845.3,290.4 H859.5 M840.3,270.5 V285.4 M840.3,295.4 V311" stroke="#111" stroke-width="1.6"/><circle cx="840.3" cy="290.4" r="10.1" fill="none" stroke="#f0f0f0" stroke-width="1.6"/><circle cx="840.3" cy="290.4" r="10.1" fill="none" stroke="#e02020" stroke-width="1.6" stroke-dasharray="5.4 5.4" stroke-dashoffset="2.7"/><line x1="958.8" y1="34.1" x2="1023.2" y2="34.1" stroke="#d9405a" stroke-width="2"/><line x1="990.9" y1="1.7" x2="990.9" y2="65.5" stroke="#79b523" stroke-width="2"/><circle cx="958.8" cy="34.1" r="7.6" fill="#5e3a42" stroke="#c8424f" stroke-width="1.8"/><circle cx="990.9" cy="65.5" r="7.6" fill="#4a5a32" stroke="#79b523" stroke-width="1.8"/><circle cx="1023.2" cy="34.1" r="8.5" fill="#d6405a"/><circle cx="990.9" cy="1.7" r="8.5" fill="#79b523"/><circle cx="990.9" cy="34.1" r="8.5" fill="#2e8ff0"/><path d="M1019.5,30 L1027,38.5 M1027,30 L1019.5,38.5" stroke="#3a0a14" stroke-width="1.6"/><path d="M987.2,30.2 H994.6 L987.2,38 H994.6" stroke="#0a2040" stroke-width="1.6" fill="none"/><path d="M987.5,-2 L990.9,2 L994.3,-2 M990.9,2 V5.5" stroke="#1a2a08" stroke-width="1.5" fill="none"/><circle cx="1018.3" cy="88.6" r="12.8" fill="#2a2a2a" fill-opacity="0.8"/><circle cx="1018.3" cy="119.2" r="12.8" fill="#2a2a2a" fill-opacity="0.8"/><circle cx="1018.3" cy="149" r="12.8" fill="#2a2a2a" fill-opacity="0.8"/><circle cx="1018.3" cy="178.2" r="12.8" fill="#2a2a2a" fill-opacity="0.8"/><circle cx="1020.6" cy="87.2" r="5.6" fill="none" stroke="#e6e6e6" stroke-width="1.4"/><path d="M1016.6,91.2 L1012,95.8" stroke="#e6e6e6" stroke-width="2"/><path d="M1020.6,84.2 V90.2 M1017.6,87.2 H1023.6" stroke="#e6e6e6" stroke-width="1.3"/><path d="M1011,118.5 C1010.5,116.5 1012.8,115.8 1013.8,117.5 L1015,119.5 V111.8 C1015,110 1017.2,110 1017.2,111.8 V117.5 V109.8 C1017.2,108 1019.5,108 1019.5,109.8 V117.5 V110.5 C1019.5,108.8 1021.8,108.8 1021.8,110.5 V117.8 V113 C1021.8,111.3 1024,111.3 1024,113 V121 C1024,124.5 1021.5,127 1018.5,127 C1015.5,127 1013.5,125 1012.5,122.5Z" fill="#e6e6e6"/><circle cx="1015.2" cy="144.6" r="3.6" fill="#e6e6e6"/><circle cx="1021.8" cy="143.6" r="3.6" fill="#e6e6e6"/><circle cx="1015.2" cy="144.6" r="1.1" fill="#2a2a2a"/><circle cx="1021.8" cy="143.6" r="1.1" fill="#2a2a2a"/><rect x="1012.8" y="148.6" width="10.2" height="5.6" fill="#e6e6e6"/><path d="M1023,151.4 L1027,148.4 V154.6 Z M1010,150.2 H1012.8 V152.4 H1010Z" fill="#e6e6e6"/><path d="M1011.4,171 H1027.2 V186 H1011.4Z M1011.4,174.75 H1027.2 M1011.4,178.5 H1027.2 M1011.4,182.25 H1027.2 M1015.35,171 V186 M1019.3,171 V186 M1023.25,171 V186" stroke="#e6e6e6" stroke-width="1.1" fill="none"/><path d="M1039.6,2 L1035.4,5.5 L1039.6,9" stroke="#cfcfcf" stroke-width="1.2" fill="none"/></g></svg>
<div class="abs" style="left:620px;top:-5px;width:40.3px;height:31px;background:#4772b3;border-radius:5px 5px 0px 0px"></div><div class="abs" style="left:620px;top:26.6px;width:40.3px;height:34.199999999999996px;background:#2c2c2c;border-radius:0px 0px 5px 5px"></div><div class="abs" style="left:620px;top:67.4px;width:40.3px;height:33.599999999999994px;background:#2c2c2c;border-radius:5px 5px 0px 0px"></div><div class="abs" style="left:620px;top:101.6px;width:40.3px;height:34.400000000000006px;background:#2c2c2c;border-radius:0px 0px 0px 0px"></div><div class="abs" style="left:620px;top:136.6px;width:40.3px;height:34.0px;background:#2c2c2c;border-radius:0px 0px 0px 0px"></div><div class="abs" style="left:620px;top:171.2px;width:40.3px;height:34.0px;background:#2c2c2c;border-radius:0px 0px 5px 5px"></div><div class="abs" style="left:620px;top:212.4px;width:40.3px;height:33.79999999999998px;background:#2c2c2c;border-radius:5px 5px 0px 0px"></div><div class="abs" style="left:620px;top:246.8px;width:40.3px;height:34.39999999999998px;background:#2c2c2c;border-radius:0px 0px 5px 5px"></div><div class="abs" style="left:620px;top:288px;width:40.3px;height:32.80000000000001px;background:#2c2c2c;border-radius:5px 5px 5px 5px"></div><div class="vt" style="left:678px;top:-6px">Top Orthographic</div><div class="vt" style="left:678px;top:12.4px">(2) Collection | Curve.003</div><div class="vt" style="left:678px;top:30.3px">Meters</div>
<svg class="abs" style="left:0;top:0" width="1245" height="476"><path d="M628.8,-4 V19.1 H649.4 V-4" fill="none" stroke="#f5a000" stroke-width="1.5" stroke-dasharray="4 2.4"/><path d="M636.2,3.6 V14.4 L638.8,12.2 L643.8,10.4 Z" fill="#dadada"/><path d="M654.6,24.3 L658.4,20.8 V24.3Z" fill="#a8b8d0"/><circle cx="639.2" cy="44" r="11.2" fill="none" stroke="#f0f0f0" stroke-width="1.6"/><circle cx="639.2" cy="44" r="11.2" fill="none" stroke="#913434" stroke-width="1.8" stroke-dasharray="4.4 4.4" stroke-dashoffset="0"/><path d="M639.2,37 V42 M639.2,46 V51 M632,44 H637.3 M641.1,44 H646.6" stroke="#8c8c8c" stroke-width="1.5"/><path d="M638.9,72 L636.1,76.6 H641.7Z M638.9,95.8 L636.1,91.2 H641.7Z M627.2,83.9 L631.8,81.1 V86.7Z M650.6,83.9 L646,81.1 V86.7Z" fill="#dcdcdc"/><path d="M638.9,77.4 V80.6 M638.9,87.2 V90.4 M632.4,83.9 H635.6 M642.2,83.9 H645.4" stroke="#dcdcdc" stroke-width="1.6"/><path d="M630.2,116.5 A9.5,9.5 0 0 1 646.5,114.5 M647.2,122.5 A9.5,9.5 0 0 1 630.9,124.3" stroke="#e0e0e0" stroke-width="1.5" fill="none"/><path d="M638.7,115.9 L642.2,119.4 L638.7,122.9 L635.2,119.4Z" fill="#a8a8a8"/><path d="M627.3,118.6 H632.7 L630,122.8Z M645,120.2 H650.5 L647.7,115.8Z" fill="#e0e0e0"/><path d="M639.5,145.8 H647.5 V162 H639.5" fill="none" stroke="#c8c8c8" stroke-width="1.3"/><path d="M630.3,153 V145.8 H636" fill="none" stroke="#c8c8c8" stroke-width="1.3"/><rect x="630" y="153.6" width="9.1" height="9.5" fill="#e0e0e0"/><path d="M641,152.3 L645.5,147.8" stroke="#e0e0e0" stroke-width="1.4"/><path d="M646.3,146.9 L641.8,147.9 L645.3,151.4Z" fill="#e0e0e0"/><path d="M653.6,168.9 L657.9,165 V168.9Z" fill="#9a9a9a"/><circle cx="638.7" cy="188.6" r="9.6" fill="none" stroke="#e0e0e0" stroke-width="1.4" stroke-dasharray="5.5 2.05" stroke-dashoffset="1.5"/><rect x="634.7" y="184.6" width="8" height="8" fill="#e6e6e6"/><path d="M638.7,176.8 L636,180.5 H641.4Z M638.7,200.4 L636,196.7 H641.4Z M626.9,188.6 L630.6,185.9 V191.3Z M650.5,188.6 L646.8,185.9 V191.3Z" fill="#e6e6e6"/><path d="M629.2,232.4 L642.2,220.3" stroke="#e2e2e2" stroke-width="3.9" stroke-linecap="round"/><path d="M627.3,234.3 L628.6,230.3 L631.2,232.9Z" fill="#e2e2e2"/><path d="M629.8,231.8 L632.2,234.2 M639.5,222.8 L641.9,225.2" stroke="#2c2c2c" stroke-width="0.7"/><path d="M628.2,235.8 C630.5,238 633,238.6 636,237.6 C639,236.5 641.5,231.6 645.5,231.4 C648.5,231.3 650.5,233.5 651.5,236" stroke="#6fcf9f" stroke-width="1.3" fill="none" stroke-linecap="round"/><path d="M654,245 L657.8,241.4 V245Z" fill="#9a9a9a"/><path d="M635.8,263 A9.3,9.3 0 0 1 645.1,272.2 H635.8Z" fill="#7fd6a8"/><path d="M635.8,260.2 A12,12 0 0 1 647.8,272.2" stroke="#7fd6a8" stroke-width="1.1" fill="none"/><path d="M630.4,253 H635.8 V272.2 H650.9 V275.5 H630.4Z" fill="#e0e0e0"/><rect x="633.6" y="255.0" width="2.3" height="1.3" fill="#2c2c2c"/><rect x="633.6" y="257.7" width="2.3" height="1.3" fill="#2c2c2c"/><rect x="633.6" y="260.4" width="2.3" height="1.3" fill="#2c2c2c"/><rect x="633.6" y="263.1" width="2.3" height="1.3" fill="#2c2c2c"/><rect x="633.6" y="265.8" width="2.3" height="1.3" fill="#2c2c2c"/><rect x="633.6" y="268.5" width="2.3" height="1.3" fill="#2c2c2c"/><rect x="637.4" y="272.1" width="1.3" height="1.8" fill="#2c2c2c"/><rect x="640.1" y="272.1" width="1.3" height="1.8" fill="#2c2c2c"/><rect x="642.8" y="272.1" width="1.3" height="1.8" fill="#2c2c2c"/><rect x="645.5" y="272.1" width="1.3" height="1.8" fill="#2c2c2c"/><rect x="648.2" y="272.1" width="1.3" height="1.8" fill="#2c2c2c"/><path d="M629.8,291.4 V298.8 M626.1,295.1 H633.5" stroke="#7fd6a8" stroke-width="1.9"/><path d="M631.9,301.4 H646 V314.8 H631.9Z M631.9,301.4 L636.5,296.8 H650.6 L646,301.4 M650.6,296.8 V310.2 L646,314.8" stroke="#76cc9e" stroke-width="1.2" fill="none" stroke-linejoin="round"/><path d="M654,319.5 L657.8,315.9 V319.5Z" fill="#9a9a9a"/></svg>
<svg class="abs" style="left:0;top:0" width="1245" height="476"><defs><clipPath id="oc"><rect x="1044" y="0" width="201" height="119"/></clipPath></defs><g clip-path="url(#oc)"><line x1="1073.6" y1="0" x2="1073.6" y2="63" stroke="#555" stroke-width="1"/><line x1="1073.6" y1="92.8" x2="1073.6" y2="103" stroke="#8a7a5a" stroke-width="1"/><path d="M1091,-5.0 L1097.5,-1.5 L1091,2.0Z" fill="#c8c8c8"/><path d="M1091,15.399999999999999 L1097.5,18.9 L1091,22.4Z" fill="#c8c8c8"/><path d="M1091,35.0 L1097.5,38.5 L1091,42.0Z" fill="#c8c8c8"/><path d="M1091,55.0 L1097.5,58.5 L1091,62.0Z" fill="#c8c8c8"/><path d="M1091,95 L1097.5,98.5 L1091,102Z" fill="#d0d0d0"/><path d="M1070.5,76 H1076.5 L1073.5,82Z" fill="#d0d0d0"/><path d="M1110.3,1 H1118.4 M1110.8,3.5 H1117.9 M1112,5.8 H1116.7" stroke="#e08f4a" stroke-width="1.3"/><path d="M1109,-6 H1120 V-1 H1109Z" fill="#e08f4a"/><path d="M1111.3,12.3 C1121.5,12.8 1121.5,23.8 1108.3,23.6" stroke="#e08f4a" stroke-width="2.6" fill="none" stroke-linecap="round"/><circle cx="1109.6" cy="35.3" r="3.4" fill="#e08f4a"/><circle cx="1116.2" cy="34.6" r="3.6" fill="#e08f4a"/><circle cx="1109.6" cy="35.3" r="1" fill="#282828"/><circle cx="1116.2" cy="34.6" r="1" fill="#282828"/><rect x="1108.1" y="39.7" width="9.5" height="5" fill="#e08f4a"/><path d="M1117.2,41.8 L1121.3,39 V44.9Z M1106.4,41 H1108.2 V42.8 H1106.4Z" fill="#e08f4a"/><path d="M1106.4,50.7 H1121.5 L1114,64.9Z M1111,54.1 H1117.4 L1114.2,60.4Z" fill="#e08f4a" fill-rule="evenodd"/><path d="M1087,72 H1101 V75 H1087Z M1088,76.5 H1100 V84.5 H1088Z" fill="#e0e0e0"/><rect x="1091.5" y="78" width="5" height="1.6" fill="#282828"/><rect x="1104.3" y="89.3" width="19.4" height="17.4" rx="4" fill="#5a7099" fill-opacity="0.7" stroke="#6f86ad" stroke-width="0.8"/><path d="M1106.4,90.7 H1121.5 L1114,104.9Z M1111,94.1 H1117.4 L1114.2,100.4Z" fill="#e08f4a" fill-rule="evenodd"/><path d="M1173,4 L1178,-1 M1180,-2 L1182,3 H1187.5 L1186,-3" stroke="#22c0a0" stroke-width="1.2" fill="none"/><path d="M1218.5,12.9 C1226,13.5 1226,22.5 1214.2,22.8" stroke="#22c0a0" stroke-width="1.2" fill="none"/><rect x="1215.6" y="11.3" width="3.2" height="3.2" fill="#282828" stroke="#22c0a0" stroke-width="1.1"/><rect x="1211.3" y="21.2" width="3.2" height="3.2" fill="#282828" stroke="#22c0a0" stroke-width="1.1"/><rect x="1187.4" y="29.6" width="19.6" height="16.7" rx="4" fill="#4a4a4a" stroke="#5a5a5a" stroke-width="0.8"/><path d="M1192.2,37.8 C1190.2,36 1191,32.5 1194.3,32.2 C1195.3,29.5 1199.5,29.2 1202,31 C1203.8,32.6 1203.5,36 1201.8,37.5 Z" stroke="#22c0a0" stroke-width="1.1" fill="none"/><circle cx="1199.3" cy="33.6" r="0.9" fill="#22c0a0"/><circle cx="1194" cy="35.3" r="0.6" fill="#22c0a0"/><rect x="1192.2" y="40.5" width="8" height="3.6" stroke="#22c0a0" stroke-width="1.1" fill="none"/><path d="M1200.2,42.3 L1203.3,40.2 V44.4Z M1190.2,41 V43.6 M1190.2,42.3 H1192" stroke="#22c0a0" stroke-width="1" fill="none"/><path d="M1191.5,63 L1199,55.5 C1198,52 1201,49.5 1205,50.5 L1202,53.5 L1203.5,55 L1206.5,52 C1207.5,56 1205,59 1201.5,58 L1194,65.5Z" fill="none" stroke="#5a80d0" stroke-width="1.3"/><path d="M1213.4,52.2 H1225.4 L1219.4,63.2Z" stroke="#22c0a0" stroke-width="1.1" fill="none"/><rect x="1212.1000000000001" y="50.900000000000006" width="2.6" height="2.6" fill="#282828" stroke="#22c0a0" stroke-width="1"/><rect x="1224.1000000000001" y="50.900000000000006" width="2.6" height="2.6" fill="#282828" stroke="#22c0a0" stroke-width="1"/><rect x="1218.1000000000001" y="62.2" width="2.6" height="2.6" fill="#282828" stroke="#22c0a0" stroke-width="1"/><path d="M1205.5,92.8 H1217.5 L1211.5,103.8Z" stroke="#22c0a0" stroke-width="1.1" fill="none"/><rect x="1204.2" y="91.5" width="2.6" height="2.6" fill="#334d80" stroke="#22c0a0" stroke-width="1"/><rect x="1216.2" y="91.5" width="2.6" height="2.6" fill="#334d80" stroke="#22c0a0" stroke-width="1"/><rect x="1210.2" y="102.8" width="2.6" height="2.6" fill="#334d80" stroke="#22c0a0" stroke-width="1"/></g></svg>
<div class="ot" style="left:1128px;top:-8.3px;color:#c8c8c8">Area</div>
<div class="ot" style="left:1128px;top:12.099999999999998px;color:#c8c8c8">BezierCurve</div>
<div class="ot" style="left:1128px;top:31.7px;color:#c8c8c8">Camera</div>
<div class="ot" style="left:1128px;top:51.7px;color:#c8c8c8">Cylinder</div>
<div class="ot" style="left:1108.5px;top:71.7px;color:#d8d8d8;font-size:10.66px">Plasma_coloured_logo.svg</div>
<div class="ot" style="left:1128px;top:91.7px;color:#f5a623">Curve.003</div>
<div class="abs" style="left:1053px;top:125.5px;width:31px;height:18.5px;background:#282828;border:1px solid #383838;border-radius:4px"></div>
<div class="abs" style="left:1132.5px;top:124.6px;width:110px;height:19px;background:#1d1d1d;border:1px solid #3a3a3a;border-radius:4px"></div>
<div class="abs" style="left:1045.9px;top:404.5px;width:26.5px;height:25px;background:#2d2d2d;border-radius:4px 0 0 4px"></div>
<div class="abs" style="left:1081px;top:191px;width:170px;height:19px;background:#2f2f2f;border:1px solid #3a3a3a;border-radius:4px"></div>
<div class="ot" style="left:1106px;top:157.8px;color:#e0e0e0;font-size:11.3px">Curve.003</div>
<div class="ot" style="left:1087.8px;top:193.6px;color:#e0e0e0">Add Modifier</div>
<svg class="abs" style="left:0;top:0" width="1245" height="476"><rect x="1058" y="127.5" width="13" height="6.2" rx="3.1" fill="#e6e6e6"/><rect x="1058" y="135.2" width="13" height="6.2" rx="3.1" fill="#e6e6e6"/><path d="M1065.5,128.7 H1067.3 A1.9,1.9 0 0 1 1067.3,132.5 H1065.5Z M1065.5,136.4 H1067.3 A1.9,1.9 0 0 1 1067.3,140.2 H1065.5Z" fill="#282828"/><path d="M1074.3,133.2 L1077.4,136.3 L1080.5,133.2" stroke="#e6e6e6" stroke-width="1.1" fill="none"/><circle cx="1148" cy="131.5" r="4.3" fill="none" stroke="#e6e6e6" stroke-width="1.2"/><path d="M1145,134.5 L1138.8,140.5" stroke="#e6e6e6" stroke-width="1.3"/><path d="M1083.5,161 V158 H1086.5 M1093.5,158 H1096.5 V161 M1096.5,168 V171 H1093.5 M1086.5,171 H1083.5 V168" stroke="#d8d8d8" stroke-width="1" fill="none"/><rect x="1086" y="160.5" width="8" height="8" fill="#e6e6e6"/><path d="M1054.2,162.3 V168.8" stroke="#d8d8d8" stroke-width="1.2"/><circle cx="1054.2" cy="172.4" r="2.6" fill="#d8d8d8"/><path d="M1062.4,174.6 V166.5" stroke="#d8d8d8" stroke-width="2.3" stroke-linecap="round"/><path d="M1059.8,162.3 V164.2 C1059.8,167.6 1065,167.6 1065,164.2 V162.3" stroke="#d8d8d8" stroke-width="2" fill="none"/><rect x="1052.6" y="200.4" width="12.6" height="9.2" rx="0.8" fill="none" stroke="#d8d8d8" stroke-width="1.4"/><rect x="1055.6" y="197.8" width="5.4" height="2.6" fill="#d8d8d8"/><path d="M1054.6,203 H1061 M1054.6,205 H1061 M1054.6,207 H1061" stroke="#d8d8d8" stroke-width="0.9"/><rect x="1062.4" y="202.3" width="1.6" height="1.6" fill="#d8d8d8"/><rect x="1062.4" y="205.8" width="1.6" height="1.6" fill="#d8d8d8"/><rect x="1063" y="197.8" width="2" height="0.9" fill="#d8d8d8"/><path d="M1052.6,230.2 V227.6 C1052.6,226.7 1053.3,226.1 1054.2,226.1 H1064.9 C1065.8,226.1 1066.5,226.7 1066.5,227.6 V230.2Z" fill="#d8d8d8"/><rect x="1055" y="230.2" width="9" height="9" fill="#8a8a8a"/><path d="M1056.5,238 L1059,234.2 L1061.5,238Z" fill="#262626"/><circle cx="1062" cy="232.4" r="0.9" fill="#d8d8d8"/><path d="M1054.7,256.5 V265 H1063.2 M1052.7,258.5 V267 H1061.2" stroke="#8a8a8a" stroke-width="1" fill="none"/><rect x="1056.7" y="254" width="9" height="9" fill="#8a8a8a" stroke="#d8d8d8" stroke-width="1"/><path d="M1058,262 L1060.5,257.6 L1063,262Z" fill="#d8d8d8"/><circle cx="1063.4" cy="256.2" r="0.9" fill="#d8d8d8"/><path d="M1056.3,281.8 L1052.6,292.5 H1060Z" fill="#a8a8a8"/><circle cx="1064" cy="284" r="1.9" fill="#d8d8d8"/><circle cx="1061.6" cy="290.9" r="3.9" fill="#1e1e1e" stroke="#d8d8d8" stroke-width="1.4"/><circle cx="1061" cy="290.3" r="1" fill="#d8d8d8"/><circle cx="1058.6" cy="316.8" r="6" fill="#2a1e20" stroke="#b04858" stroke-width="1"/><path d="M1053.5,313.5 C1055,311 1058,310.5 1060,311.5 C1059,313.5 1061,314.5 1063,314 C1064.5,316 1064,318 1063,319.5 C1061,318 1059.5,319 1060,321.5 C1058,322.5 1056,322.5 1054.5,321 C1056,319 1056.5,317 1054.5,316 C1053.5,315.5 1053.3,314.5 1053.5,313.5Z" fill="#c05565"/><path d="M1065,310.3 L1052.2,323.3" stroke="#c05565" stroke-width="1"/><path d="M1052.4,347.8 H1065.5 V351 H1052.4Z M1053.4,351.8 H1064.5 V359.5 H1053.4Z" fill="none" stroke="#d8d8d8" stroke-width="1.1"/><rect x="1057" y="353.3" width="4" height="1.4" fill="#d8d8d8"/><path d="M1052.2,385.2 V382.3 H1055.1 M1062.8,382.3 H1065.7 V385.2 M1065.7,391.3 V394.2 H1062.8 M1055.1,394.2 H1052.2 V391.3" stroke="#c88a55" stroke-width="1" fill="none"/><rect x="1054.8" y="384.1" width="8.4" height="8.3" fill="#d08a4a"/><path d="M1053,422 L1059.5,415.5" stroke="#5a90e8" stroke-width="3" stroke-linecap="round"/><path d="M1058.5,416.2 C1057.5,412.5 1060.5,409.3 1064.5,410.2 L1062,413 L1063.6,414.6 L1066.3,412 C1067.2,416 1064,419 1060.3,418Z" fill="#5a90e8" stroke="#5a90e8" stroke-width="0.8"/><path d="M1054.4,439.9 H1064.7 M1054.4,439.9 V450.7 M1054.4,439.9 L1063.9,450.2" stroke="#5a90e8" stroke-width="1.1"/><circle cx="1054.4" cy="439.9" r="2.4" fill="#5a90e8"/><circle cx="1064.7" cy="440.4" r="1.6" fill="#5a90e8"/><circle cx="1054.4" cy="450.7" r="1.6" fill="#5a90e8"/><circle cx="1063.9" cy="450.2" r="2.1" fill="#5a90e8"/><path d="M1062.5,467 A6.4,6.4 0 1 0 1065.4,472" stroke="#5a90e8" stroke-width="1.5" fill="none"/><circle cx="1059.2" cy="472.6" r="2.9" fill="#5a90e8"/><circle cx="1063.9" cy="467.8" r="1.9" fill="#5a90e8"/><path d="M1044,331.5 H1072 M1044,368.3 H1072" stroke="#222" stroke-width="1"/></svg></body></html>
